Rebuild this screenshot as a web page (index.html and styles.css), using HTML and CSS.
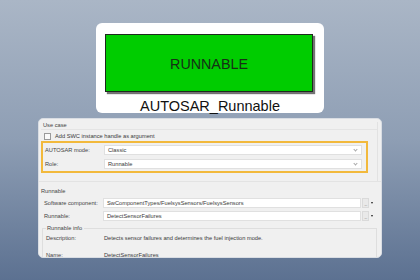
FILE: index.html
```html
<!DOCTYPE html>
<html lang="en">
<head>
    <meta charset="utf-8"/>
    <title>AUTOSAR Runnable</title>
    <link rel="stylesheet" href="styles.css">
</head>
<body>
    <div class="card">
        <div class="block">RUNNABLE</div>
        <div class="caption">AUTOSAR_Runnable</div>
    </div>

    <div class="panel">
        <div class="usecase">
            <div class="legend">Use case</div>
            <label class="check"><span class="box"></span>Add SWC instance handle as argument</label>
            <div class="highlight">
                <div class="row">
                    <span class="label">AUTOSAR mode:</span>
                    <div class="combo">Classic<span class="chev"></span></div>
                </div>
                <div class="row">
                    <span class="label">Role:</span>
                    <div class="combo">Runnable<span class="chev"></span></div>
                </div>
            </div>
        </div>

        <div class="runnable">
            <div class="legend">Runnable</div>
            <div class="row">
                <span class="label">Software component:</span>
                <div class="field">SwComponentTypes/FuelsysSensors/FuelsysSensors</div>
                <span class="browse">...</span>
                <span class="drop"></span>
            </div>
            <div class="row">
                <span class="label">Runnable:</span>
                <div class="field">DetectSensorFailures</div>
                <span class="browse">...</span>
                <span class="drop"></span>
            </div>

            <fieldset class="info">
                <legend>Runnable info</legend>
                <div class="inforow desc">
                    <span class="label">Description:</span>
                    <span>Detects sensor failures and determines the fuel injection mode.</span>
                </div>
                <div class="inforow">
                    <span class="label">Name:</span>
                    <span>DetectSensorFailures</span>
                </div>
            </fieldset>
        </div>
    </div>
</body>
</html>
```

FILE: styles.css
```css
*{
    margin: 0;
    padding: 0;
    box-sizing: border-box;
}
body{
    display: flex;
    flex-direction: column;
    align-items: center;
    width: 420px;
    height: 280px;
    overflow: hidden;
    background: linear-gradient(180deg, #aab6c6 0%, #8e9eb4 50%, #5c7191 100%);
    font-family: "Liberation Sans", Arial, sans-serif;
}
.card{
    margin-top: 23px;
    width: 228px;
    height: 90px;
    padding: 11px 0 0 9px;
    background: white;
    border-radius: 6px;
}
.block{
    display: flex;
    justify-content: center;
    align-items: center;
    width: 208px;
    height: 58px;
    background: #00cc00;
    border: 1px solid #1e2a1e;
    box-shadow: 2px 2px 1px rgba(0, 0, 0, 0.55);
    font-size: 14.3px;
    color: #163016;
    padding-top: 1px;
}
.caption{
    margin: 7px 0 0 -9px;
    text-align: center;
    font-size: 14.5px;
    line-height: 14px;
    color: #111;
}
.panel{
    margin-top: 5px;
    width: 344px;
    height: 140px;
    background: #f0f0f0;
    border: 1px solid #d9dde3;
    border-radius: 5px;
    overflow: hidden;
    font-size: 5.7px;
    color: #3a3a3a;
}
.legend{
    line-height: 7px;
    color: #444;
}
.usecase{
    margin: 0 3px 0 2px;
    height: 59px;
    border-right: 1px solid #e2e2e2;
}
.usecase .legend{
    margin-top: 3px;
    padding-left: 2px;
    border-bottom: 1px solid #e4e4e4;
}
.check{
    display: flex;
    align-items: center;
    gap: 4px;
    margin: 3px 0 0 3px;
    line-height: 7px;
}
.box{
    width: 7px;
    height: 7px;
    background: #fafafa;
    border: 1px solid #9a9a9a;
}
.highlight{
    margin-top: 1px;
    width: 327px;
    padding: 2px 0 0 2px;
    height: 32px;
    border: 2px solid #f2b93c;
}
.row{
    display: flex;
    align-items: center;
    height: 10px;
}
.highlight .row + .row{
    margin-top: 4px;
}
.label{
    width: 59px;
    flex: none;
    color: #444;
}
.combo, .field{
    position: relative;
    width: 258px;
    height: 10px;
    line-height: 9px;
    padding-left: 3px;
    background: white;
    border: 1px solid #e0e0e0;
}
.chev{
    position: absolute;
    right: 4px;
    top: 2px;
    width: 3px;
    height: 3px;
    border-right: 1px solid #a8a8a8;
    border-bottom: 1px solid #a8a8a8;
    transform: rotate(45deg);
}
.runnable{
    border-top: 1px solid #e3e3e3;
    height: 80px;
}
.runnable .legend{
    margin-top: 6px;
    padding-left: 2px;
}
.runnable .row{
    margin-top: 3px;
    padding-left: 5px;
}
.browse{
    width: 7px;
    height: 10px;
    margin-left: 1px;
    background: #e9e9e9;
    border: 1px solid #dadada;
    color: #888;
    font-size: 5px;
    line-height: 10px;
    text-align: center;
    letter-spacing: -0.5px;
}
.drop{
    width: 0;
    height: 0;
    margin-left: 2px;
    border-left: 1.5px solid transparent;
    border-right: 1.5px solid transparent;
    border-top: 2px solid #222;
}
.info{
    margin: 4px 4px 0 3px;
    padding: 0 0 0 3px;
    height: 40px;
    border: 1px solid #dedede;
    border-bottom: none;
}
.info legend{
    margin-left: 0;
    padding: 0 2px 0 1px;
    line-height: 7px;
    color: #444;
}
.inforow{
    display: flex;
    line-height: 7px;
}
.inforow .label{
    width: 58px;
}
.desc{
    margin-top: 3px;
    height: 17px;
}
```
